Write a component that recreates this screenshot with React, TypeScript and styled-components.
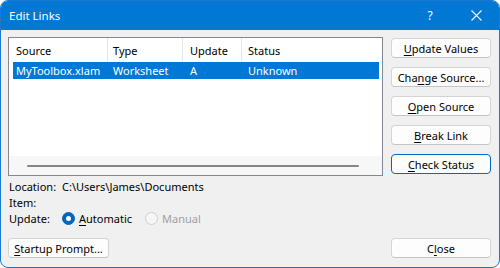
import React from "react"
import styled, { createGlobalStyle } from "styled-components"

const GlobalStyle = createGlobalStyle`
  html, body {
    margin: 0;
    padding: 0;
    background: #ffffff;
  }
  * {
    box-sizing: border-box;
  }
`

const Window = styled.div`
  width: 500px;
  height: 268px;
  border: 1px solid #1a78d2;
  border-radius: 8px;
  overflow: hidden;
  background: #f0f0f0;
  display: flex;
  flex-direction: column;
  font-family: "Noto Sans", "Open Sans", sans-serif;
  font-size: 11px;
  color: #000;
`

const TitleBar = styled.div`
  height: 29px;
  background: #0078d4;
  color: #fff;
  display: flex;
  align-items: center;
  padding-left: 8px;
  flex-shrink: 0;
`

const Title = styled.span`
  flex: 1;
  font-size: 11.5px;
`

const TitleButton = styled.span`
  width: 46px;
  height: 29px;
  display: flex;
  align-items: center;
  justify-content: center;
  color: #fff;
  font-size: 12px;
`

const Body = styled.div`
  flex: 1;
  display: flex;
  flex-direction: column;
  padding: 7px 7px 8px 7px;
`

const MainRow = styled.div`
  display: flex;
  justify-content: space-between;
`

const LeftColumn = styled.div`
  width: 375px;
  display: flex;
  flex-direction: column;
`

const ListBox = styled.div`
  height: 139px;
  border: 1px solid #828790;
  background: #fff;
  display: flex;
  flex-direction: column;
`

const HeaderRow = styled.div`
  height: 24px;
  display: grid;
  grid-template-columns: 99px 75px 59px 1fr;
  flex-shrink: 0;
`

const HeaderCell = styled.div`
  padding-left: ${(p: { $pad: number }) => p.$pad}px;
  display: flex;
  align-items: center;
  border-right: 1px solid #e5e5e5;
  &:last-child {
    border-right: none;
  }
`

const DataRow = styled.div`
  height: 17px;
  margin: 0 3px 0 4px;
  background: #0078d7;
  color: #fff;
  display: grid;
  grid-template-columns: 95px 75px 59px 1fr;
  align-items: center;
`

const DataCell = styled.div`
  padding-left: ${(p: { $pad: number }) => p.$pad}px;
  white-space: nowrap;
`

const ListSpace = styled.div`
  flex: 1;
`

const ScrollTrack = styled.div`
  height: 19px;
  background: #f7f7f7;
  display: flex;
  align-items: center;
  padding: 0 23px 0 18px;
`

const ScrollThumb = styled.div`
  flex: 1;
  height: 2px;
  background: #858585;
  border-radius: 1px;
`

const InfoBlock = styled.div`
  margin-top: 2px;
  display: flex;
  flex-direction: column;
`

const InfoRow = styled.div`
  height: 16px;
  display: flex;
  align-items: center;
`

const InfoLabel = styled.span`
  width: 54px;
  padding-left: 1px;
  flex-shrink: 0;
`

const RadioOption = styled.span`
  display: flex;
  align-items: center;
  gap: 4px;
  margin-right: 13px;
  color: ${(p: { $disabled?: boolean }) => (p.$disabled ? "#a0a0a0" : "#000")};
`

const RadioCircle = styled.span<{ $checked?: boolean }>`
  width: 13px;
  height: 13px;
  border-radius: 50%;
  display: flex;
  align-items: center;
  justify-content: center;
  background: ${(p) => (p.$checked ? "#0067c0" : "#f6f6f6")};
  border: 1px solid ${(p) => (p.$checked ? "#0067c0" : "#cfcfcf")};
  &::after {
    content: "";
    display: ${(p) => (p.$checked ? "block" : "none")};
    width: 5px;
    height: 5px;
    border-radius: 50%;
    background: #fff;
  }
`

const ButtonColumn = styled.div`
  width: 100px;
  margin-right: 1px;
  margin-top: 1px;
  display: flex;
  flex-direction: column;
  gap: 9px;
`

const Button = styled.div<{ $focused?: boolean; $width?: number }>`
  height: 20px;
  width: ${(p) => (p.$width ? `${p.$width}px` : "100%")};
  background: #fdfdfd;
  border: 1px solid ${(p) => (p.$focused ? "#0067c0" : "#d4d4d4")};
  border-bottom-color: ${(p) => (p.$focused ? "#0067c0" : "#c4c4c4")};
  border-radius: 4px;
  display: flex;
  align-items: center;
  justify-content: center;
  white-space: nowrap;
`

const Footer = styled.div`
  margin-top: auto;
  margin-bottom: 1px;
  display: flex;
  justify-content: space-between;
  padding-right: 1px;
`

const Key = styled.span`
  text-decoration: underline;
  text-underline-offset: 2px;
`

function CloseIcon() {
  return (
    <svg width="11" height="11" viewBox="0 0 11 11">
      <path d="M0.5 0.5 L10.5 10.5 M10.5 0.5 L0.5 10.5" stroke="#fff" strokeWidth="1.1" fill="none" />
    </svg>
  )
}

export default function App() {
  return (
    <>
      <GlobalStyle />
      <Window>
        <TitleBar>
          <Title>Edit Links</Title>
          <TitleButton>?</TitleButton>
          <TitleButton>
            <CloseIcon />
          </TitleButton>
        </TitleBar>
        <Body>
          <MainRow>
            <LeftColumn>
              <ListBox>
                <HeaderRow>
                  <HeaderCell $pad={7}>Source</HeaderCell>
                  <HeaderCell $pad={5}>Type</HeaderCell>
                  <HeaderCell $pad={7}>Update</HeaderCell>
                  <HeaderCell $pad={6}>Status</HeaderCell>
                </HeaderRow>
                <DataRow>
                  <DataCell $pad={3}>MyToolbox.xlam</DataCell>
                  <DataCell $pad={5}>Worksheet</DataCell>
                  <DataCell $pad={7}>A</DataCell>
                  <DataCell $pad={6}>Unknown</DataCell>
                </DataRow>
                <ListSpace />
                <ScrollTrack>
                  <ScrollThumb />
                </ScrollTrack>
              </ListBox>
              <InfoBlock>
                <InfoRow>
                  <InfoLabel>Location:</InfoLabel>
                  <span>C:\Users\James\Documents</span>
                </InfoRow>
                <InfoRow>
                  <InfoLabel>Item:</InfoLabel>
                </InfoRow>
                <InfoRow>
                  <InfoLabel>Update:</InfoLabel>
                  <RadioOption>
                    <RadioCircle $checked />
                    <span>
                      <Key>A</Key>utomatic
                    </span>
                  </RadioOption>
                  <RadioOption $disabled>
                    <RadioCircle />
                    <span>Manual</span>
                  </RadioOption>
                </InfoRow>
              </InfoBlock>
            </LeftColumn>
            <ButtonColumn>
              <Button>
                <Key>U</Key>pdate Values
              </Button>
              <Button>
                Cha<Key>n</Key>ge Source...
              </Button>
              <Button>
                <Key>O</Key>pen Source
              </Button>
              <Button>
                <Key>B</Key>reak Link
              </Button>
              <Button $focused>
                <Key>C</Key>heck Status
              </Button>
            </ButtonColumn>
          </MainRow>
          <Footer>
            <Button $width={101}>
              <Key>S</Key>tartup Prompt...
            </Button>
            <Button $width={100}>
              C<Key>l</Key>ose
            </Button>
          </Footer>
        </Body>
      </Window>
    </>
  )
}
